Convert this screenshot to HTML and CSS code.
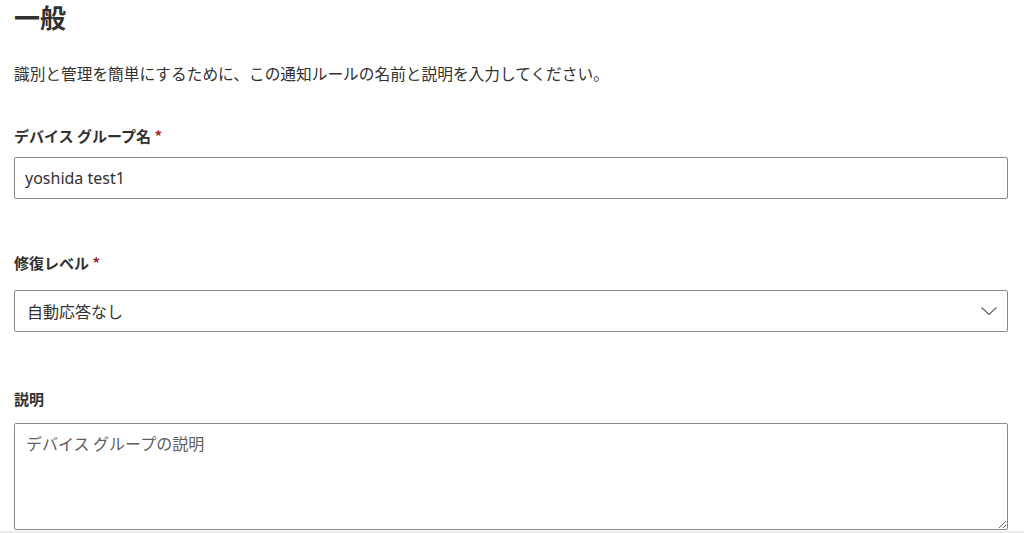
FILE: index.html
```html
<!DOCTYPE html>
<html lang="ja">
<head>
<meta charset="utf-8">
<title>一般</title>
<link rel="stylesheet" href="styles.css">
</head>
<body>
<main class="form">
  <h1 class="title">一般</h1>
  <p class="intro">識別と管理を簡単にするために、この通知ルールの名前と説明を入力してください。</p>

  <div class="field field-name">
    <label class="label required" for="name">デバイス グループ名</label>
    <input class="textbox" id="name" type="text" value="yoshida test1">
  </div>

  <div class="field field-level">
    <label class="label required">修復レベル</label>
    <div class="dropdown">
      <span class="dropdown-text">自動応答なし</span>
      <svg class="chevron" width="16" height="8" viewBox="0 0 16 8" aria-hidden="true"><path d="M0.5 0.5 L8 7.5 L15.5 0.5" fill="none" stroke="#605e5c" stroke-width="1.1"/></svg>
    </div>
  </div>

  <div class="field field-desc">
    <label class="label" for="desc">説明</label>
    <textarea class="textarea" id="desc" placeholder="デバイス グループの説明"></textarea>
  </div>
</main>
<div class="divider"></div>
</body>
</html>
```

FILE: styles.css
```css
html, body {
  margin: 0;
  padding: 0;
  background: #ffffff;
  overflow: hidden;
}
body {
  font-family: "Noto Sans", "Noto Sans CJK JP", sans-serif;
  color: #323130;
  height: 533px;
}
.form {
  padding: 0 16px 0 14px;
  display: flex;
  flex-direction: column;
}
.title {
  margin: 0;
  font-family: "Noto Sans CJK JP", sans-serif;
  font-size: 26px;
  line-height: 34px;
  font-weight: 700;
  color: #323130;
}
.intro {
  margin: 30px 0 0;
  font-family: "Noto Sans CJK JP", sans-serif;
  font-size: 15.7px;
  line-height: 20px;
  color: #323130;
}
.field {
  display: flex;
  flex-direction: column;
}
.field-name { margin-top: 42px; gap: 11px; }
.field-level { margin-top: 54px; gap: 17px; }
.field-desc { margin-top: 57px; gap: 14px; }
.label {
  font-family: "Noto Sans CJK JP", sans-serif;
  font-size: 15px;
  line-height: 20px;
  font-weight: 700;
  color: #323130;
}
.required::after {
  content: " *";
  color: #a4262c;
}
.textbox, .dropdown, .textarea {
  box-sizing: border-box;
  width: 100%;
  border: 1px solid #8a8886;
  border-radius: 2px;
  background: #ffffff;
  font-family: "Noto Sans", "Noto Sans CJK JP", sans-serif;
  font-size: 16px;
  color: #323130;
  margin: 0;
}
.textbox {
  height: 42px;
  padding: 0 10px;
  outline: none;
}
.dropdown {
  height: 42px;
  padding: 0 10px 0 12px;
  display: flex;
  align-items: center;
  justify-content: space-between;
}
.dropdown-text {
  font-family: "Noto Sans CJK JP", sans-serif;
  font-size: 16px;
}
.chevron {
  display: block;
}
.textarea {
  height: 107px;
  padding: 8px 11px;
  line-height: 22px;
  resize: vertical;
  font-family: "Noto Sans CJK JP", sans-serif;
  outline: none;
}
.textarea::placeholder {
  color: #605e5c;
  opacity: 1;
}
.divider {
  height: 2px;
  margin-top: 1px;
  background: #edebe9;
}
```
